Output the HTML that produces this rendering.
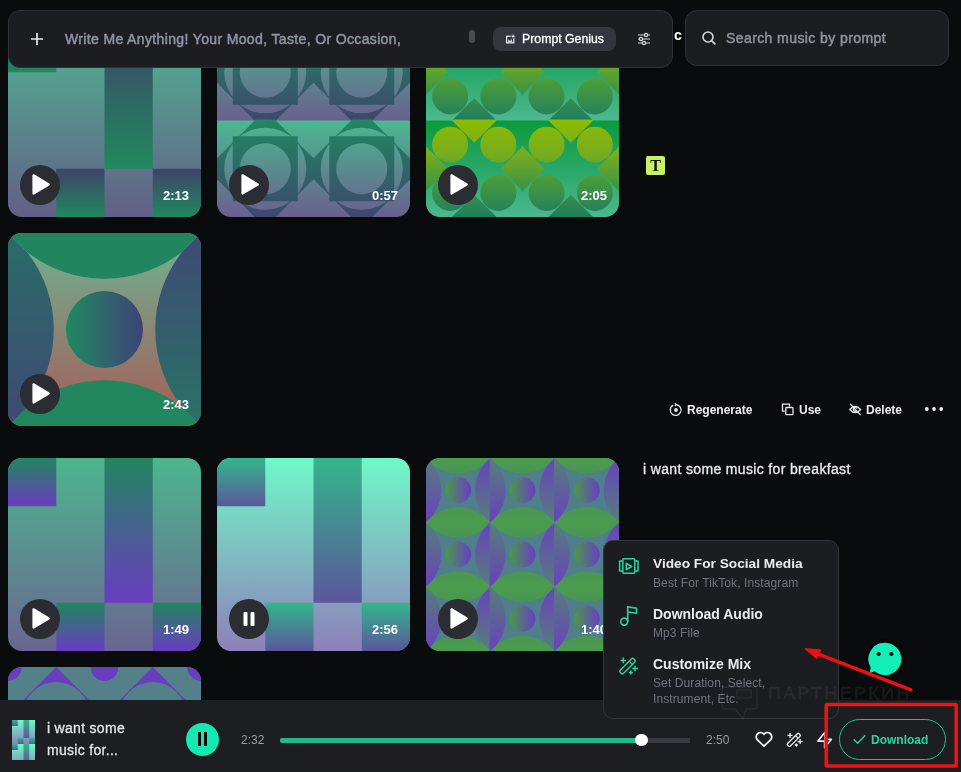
<!DOCTYPE html>
<html><head><meta charset="utf-8">
<style>
*{margin:0;padding:0;box-sizing:border-box}
html,body{width:961px;height:772px;overflow:hidden;background:#0a0b0d;font-family:"Liberation Sans",sans-serif;position:relative}
.abs{position:absolute}
.card{position:absolute;width:193px;height:193px;border-radius:14px;overflow:hidden}
.card svg{position:absolute;left:0;top:0}
.play{position:absolute;left:11.8px;top:141.3px;width:40px;height:40px;border-radius:50%;background:#2b2d33}
.play svg{position:absolute;left:0;top:0}
.dur{position:absolute;right:12px;top:164px;font-size:13px;font-weight:bold;color:#fff;line-height:16px;letter-spacing:0;will-change:transform}
.box{position:absolute;background:#1c1d21;border:1px solid #2f3137;border-radius:12px}
.txt{position:absolute;white-space:nowrap;will-change:transform}
</style></head>
<body>

<!-- ROW 1 -->
<div class="card" style="left:8px;top:24px" id="cA"><svg width="193" height="193" viewBox="0 0 193 193"><defs>
<linearGradient id="abg" x1="0" y1="0" x2="0" y2="1"><stop offset="0" stop-color="#4fb592"/><stop offset="1" stop-color="#635e86"/></linearGradient>
<linearGradient id="adk" x1="0" y1="0" x2="0" y2="1"><stop offset="0" stop-color="#3e4268"/><stop offset="1" stop-color="#20895f"/></linearGradient>
</defs>
<rect width="193" height="193" fill="url(#abg)"/>
<rect x="0" y="0" width="48.25" height="48.25" fill="url(#adk)"/>
<rect x="96.5" y="0" width="48.25" height="144.75" fill="url(#adk)"/>
<rect x="48.25" y="144.75" width="48.25" height="48.25" fill="url(#adk)"/>
<rect x="144.75" y="144.75" width="48.25" height="48.25" fill="url(#adk)"/>
</svg><div class="play"><svg width="40" height="40" viewBox="0 0 40 40"><path d="M13.5 10.3 L13.5 28.6 L28.8 19.45 Z" fill="#fff" stroke="#fff" stroke-width="2.2" stroke-linejoin="round"/></svg></div><div class="dur">2:13</div></div><!--/cA-->
<div class="card" style="left:217px;top:24px" id="cB"><svg width="193" height="193" viewBox="0 0 193 193"><defs>
<linearGradient id="bbg" gradientUnits="userSpaceOnUse" x1="0" y1="0" x2="0" y2="96.5"><stop offset="0" stop-color="#4bb891"/><stop offset="1" stop-color="#6a5f8e"/></linearGradient>
<linearGradient id="bdk" gradientUnits="userSpaceOnUse" x1="0" y1="0" x2="0" y2="96.5"><stop offset="0" stop-color="#21885f"/><stop offset="1" stop-color="#3d476f"/></linearGradient>
<g id="bg"><rect x="0" y="0" width="97.5" height="97.5" fill="url(#bbg)"/></g>
<clipPath id="bclip"><rect x="-1" y="-1" width="98.5" height="98.5"/></clipPath>
<g id="bt">
<polygon points="48.25,-10.5 107.0,48.25 48.25,107.0 -10.5,48.25" fill="url(#bdk)" clip-path="url(#bclip)"/>
<circle cx="48.25" cy="48.25" r="41" fill="url(#bbg)"/>
<rect x="15.75" y="15.75" width="65" height="65" fill="url(#bdk)"/>
<circle cx="48.25" cy="48.25" r="25.5" fill="url(#bbg)"/>
</g>
</defs>
<use href="#bg" x="0" y="0"/><use href="#bg" x="96.5" y="0"/><use href="#bg" x="0" y="96.5"/><use href="#bg" x="96.5" y="96.5"/><use href="#bt" x="0" y="0"/><use href="#bt" x="96.5" y="0"/><use href="#bt" x="0" y="96.5"/><use href="#bt" x="96.5" y="96.5"/>
</svg><div class="play"><svg width="40" height="40" viewBox="0 0 40 40"><path d="M13.5 10.3 L13.5 28.6 L28.8 19.45 Z" fill="#fff" stroke="#fff" stroke-width="2.2" stroke-linejoin="round"/></svg></div><div class="dur">0:57</div></div><!--/cB-->
<div class="card" style="left:426px;top:24px" id="cC"><svg width="193" height="193" viewBox="0 0 193 193"><defs>
<linearGradient id="cbg" gradientUnits="userSpaceOnUse" x1="0" y1="0" x2="0" y2="96.5"><stop offset="0" stop-color="#0b9a3c"/><stop offset="0.5" stop-color="#28a868"/><stop offset="1" stop-color="#4cb890"/></linearGradient>
<linearGradient id="cy" gradientUnits="userSpaceOnUse" x1="0" y1="0" x2="0" y2="96.5"><stop offset="0" stop-color="#8dbb00"/><stop offset="0.35" stop-color="#76ac20"/><stop offset="0.65" stop-color="#45983f"/><stop offset="1" stop-color="#1f7d5f"/></linearGradient>
<g id="cg"><rect x="0" y="0" width="97.5" height="97.5" fill="url(#cbg)"/></g>
<clipPath id="cclip"><rect x="-1" y="-1" width="98.5" height="98.5"/></clipPath>
<g id="ct"><polygon points="24.95,-1.0 71.55,-1.0 48.25,22.3" fill="url(#cy)"/><polygon points="24.95,97.5 71.55,97.5 48.25,74.2" fill="url(#cy)"/><polygon points="-1.0,24.95 -1.0,71.55 22.3,48.25" fill="url(#cy)"/><polygon points="97.5,24.95 97.5,71.55 74.2,48.25" fill="url(#cy)"/>
<circle cx="24.125" cy="24.125" r="18" fill="url(#cy)"/>
<circle cx="72.375" cy="24.125" r="18" fill="url(#cy)"/>
<circle cx="24.125" cy="72.375" r="18" fill="url(#cy)"/>
<circle cx="72.375" cy="72.375" r="18" fill="url(#cy)"/>
</g>
</defs>
<use href="#cg" x="0" y="0"/><use href="#cg" x="96.5" y="0"/><use href="#cg" x="0" y="96.5"/><use href="#cg" x="96.5" y="96.5"/><use href="#ct" x="0" y="0"/><use href="#ct" x="96.5" y="0"/><use href="#ct" x="0" y="96.5"/><use href="#ct" x="96.5" y="96.5"/>
</svg><div class="play"><svg width="40" height="40" viewBox="0 0 40 40"><path d="M13.5 10.3 L13.5 28.6 L28.8 19.45 Z" fill="#fff" stroke="#fff" stroke-width="2.2" stroke-linejoin="round"/></svg></div><div class="dur">2:05</div></div><!--/cC-->
<!-- ROW 2 -->
<div class="card" style="left:8px;top:233px" id="cD"><svg width="193" height="193" viewBox="0 0 193 193"><defs><linearGradient id="dab" x1="0" y1="0" x2="0" y2="1"><stop offset="0" stop-color="#6cb494"/><stop offset="1" stop-color="#a85a55"/></linearGradient>
<linearGradient id="dtc" x1="0" y1="0" x2="0" y2="1"><stop offset="0" stop-color="#21855f"/><stop offset="1" stop-color="#21855f"/></linearGradient>
<linearGradient id="dbc" x1="0" y1="0" x2="0" y2="1"><stop offset="0" stop-color="#22875f"/><stop offset="1" stop-color="#22875f"/></linearGradient>
<linearGradient id="dlc" x1="0" y1="0" x2="0" y2="1"><stop offset="0" stop-color="#2a6c68"/><stop offset="1" stop-color="#3e4a74"/></linearGradient>
<linearGradient id="drc" x1="0" y1="0" x2="0" y2="1"><stop offset="0" stop-color="#3e4a74"/><stop offset="1" stop-color="#2a7266"/></linearGradient>
<linearGradient id="dcc" x1="0" y1="0" x2="1" y2="0"><stop offset="0" stop-color="#1f8a5f"/><stop offset="1" stop-color="#3f4277"/></linearGradient>
<g id="dt">
<rect x="-0.4" y="-0.4" width="193.8" height="193.8" fill="url(#dab)"/>
<path d="M-0.6,-0.6 L193.6,-0.6 L174.25,18.75 A125.4,125.4 0 0,1 18.75,18.75 Z" fill="url(#dtc)"/>
<path d="M-0.6,193.6 L193.6,193.6 L174.25,174.25 A125.4,125.4 0 0,0 18.75,174.25 Z" fill="url(#dbc)"/>
<path d="M-0.6,-0.6 L18.75,18.75 A125.4,125.4 0 0,1 18.75,174.25 L-0.6,193.6 Z" fill="url(#dlc)"/>
<path d="M193.6,-0.6 L174.25,18.75 A125.4,125.4 0 0,0 174.25,174.25 L193.6,193.6 Z" fill="url(#drc)"/>
<circle cx="96.5" cy="96.5" r="38.5" fill="url(#dcc)"/>
</g></defs><use href="#dt"/></svg><div class="play"><svg width="40" height="40" viewBox="0 0 40 40"><path d="M13.5 10.3 L13.5 28.6 L28.8 19.45 Z" fill="#fff" stroke="#fff" stroke-width="2.2" stroke-linejoin="round"/></svg></div><div class="dur">2:43</div></div><!--/cD-->
<!-- ROW 3 -->
<div class="card" style="left:8px;top:458px" id="cE"><svg width="193" height="193" viewBox="0 0 193 193"><defs>
<linearGradient id="ebg" x1="0" y1="0" x2="0" y2="1"><stop offset="0" stop-color="#4db58e"/><stop offset="1" stop-color="#6a6592"/></linearGradient>
<linearGradient id="edk" x1="0" y1="0" x2="0" y2="1"><stop offset="0" stop-color="#22855f"/><stop offset="1" stop-color="#6a3cc2"/></linearGradient>
</defs>
<rect width="193" height="193" fill="url(#ebg)"/>
<rect x="0" y="0" width="48.25" height="48.25" fill="url(#edk)"/>
<rect x="96.5" y="0" width="48.25" height="144.75" fill="url(#edk)"/>
<rect x="48.25" y="144.75" width="48.25" height="48.25" fill="url(#edk)"/>
<rect x="144.75" y="144.75" width="48.25" height="48.25" fill="url(#edk)"/>
</svg><div class="play"><svg width="40" height="40" viewBox="0 0 40 40"><path d="M13.5 10.3 L13.5 28.6 L28.8 19.45 Z" fill="#fff" stroke="#fff" stroke-width="2.2" stroke-linejoin="round"/></svg></div><div class="dur">1:49</div></div><!--/cE-->
<div class="card" style="left:217px;top:458px" id="cF"><svg width="193" height="193" viewBox="0 0 193 193"><defs>
<linearGradient id="fbg" x1="0" y1="0" x2="0" y2="1"><stop offset="0" stop-color="#70f8c9"/><stop offset="1" stop-color="#8e80bb"/></linearGradient>
<linearGradient id="fdk" x1="0" y1="0" x2="0" y2="1"><stop offset="0" stop-color="#33b68a"/><stop offset="1" stop-color="#5b569c"/></linearGradient>
</defs>
<rect width="193" height="193" fill="url(#fbg)"/>
<rect x="0" y="0" width="48.25" height="48.25" fill="url(#fdk)"/>
<rect x="96.5" y="0" width="48.25" height="144.75" fill="url(#fdk)"/>
<rect x="48.25" y="144.75" width="48.25" height="48.25" fill="url(#fdk)"/>
<rect x="144.75" y="144.75" width="48.25" height="48.25" fill="url(#fdk)"/>
</svg><div class="play"><svg width="40" height="40" viewBox="0 0 40 40"><rect x="14.5" y="13" width="4" height="14" rx="1" fill="#fff"/><rect x="21.5" y="13" width="4" height="14" rx="1" fill="#fff"/></svg></div><div class="dur">2:56</div></div><!--/cF-->
<div class="card" style="left:426px;top:458px" id="cG"><svg width="193" height="193" viewBox="0 0 193 193"><defs><linearGradient id="gab" x1="0" y1="0" x2="0" y2="1"><stop offset="0" stop-color="#4f7f8a"/><stop offset="1" stop-color="#4f7f8a"/></linearGradient>
<linearGradient id="gtc" x1="0" y1="0" x2="0" y2="1"><stop offset="0" stop-color="#4b9c50"/><stop offset="1" stop-color="#4a9650"/></linearGradient>
<linearGradient id="gbc" x1="0" y1="0" x2="0" y2="1"><stop offset="0" stop-color="#4a9650"/><stop offset="1" stop-color="#4b9c50"/></linearGradient>
<linearGradient id="glc" x1="0" y1="0" x2="0" y2="1"><stop offset="0" stop-color="#548078"/><stop offset="1" stop-color="#6a40c0"/></linearGradient>
<linearGradient id="grc" x1="0" y1="0" x2="0" y2="1"><stop offset="0" stop-color="#6a40c0"/><stop offset="1" stop-color="#548078"/></linearGradient>
<linearGradient id="gcc" x1="0" y1="0" x2="1" y2="0"><stop offset="0" stop-color="#4a9a4a"/><stop offset="1" stop-color="#6a3cc8"/></linearGradient>
<g id="gt">
<rect x="-0.4" y="-0.4" width="65.13333333333333" height="65.13333333333333" fill="url(#gab)"/>
<path d="M-0.6,-0.6 L64.93333333333332,-0.6 L58.08333333333333,6.25 A41.8,41.8 0 0,1 6.25,6.25 Z" fill="url(#gtc)"/>
<path d="M-0.6,64.93333333333332 L64.93333333333332,64.93333333333332 L58.08333333333333,58.08333333333333 A41.8,41.8 0 0,0 6.25,58.08333333333333 Z" fill="url(#gbc)"/>
<path d="M-0.6,-0.6 L6.25,6.25 A41.8,41.8 0 0,1 6.25,58.08333333333333 L-0.6,64.93333333333332 Z" fill="url(#glc)"/>
<path d="M64.93333333333332,-0.6 L58.08333333333333,6.25 A41.8,41.8 0 0,0 58.08333333333333,58.08333333333333 L64.93333333333332,64.93333333333332 Z" fill="url(#grc)"/>
<circle cx="32.166666666666664" cy="32.166666666666664" r="12.833333333333332" fill="url(#gcc)"/>
</g></defs><use href="#gt" x="0.0" y="0.0"/><use href="#gt" x="0.0" y="64.33333333333333"/><use href="#gt" x="0.0" y="128.66666666666666"/><use href="#gt" x="64.33333333333333" y="0.0"/><use href="#gt" x="64.33333333333333" y="64.33333333333333"/><use href="#gt" x="64.33333333333333" y="128.66666666666666"/><use href="#gt" x="128.66666666666666" y="0.0"/><use href="#gt" x="128.66666666666666" y="64.33333333333333"/><use href="#gt" x="128.66666666666666" y="128.66666666666666"/></svg><div class="play"><svg width="40" height="40" viewBox="0 0 40 40"><path d="M13.5 10.3 L13.5 28.6 L28.8 19.45 Z" fill="#fff" stroke="#fff" stroke-width="2.2" stroke-linejoin="round"/></svg></div><div class="dur">1:40</div></div><!--/cG-->
<!-- ROW 4 -->
<div class="card" style="left:8px;top:667px" id="cH"><svg width="193" height="193" viewBox="0 0 193 193"><defs><g id="ht">
<polygon points="48.25,0 96.5,48.25 48.25,96.5 0,48.25" fill="#6a3dc0"/>
<circle cx="48.25" cy="48.25" r="33.25" fill="#538089"/>
<circle cx="0" cy="0" r="13.7" fill="#6a3dc0"/>
<circle cx="96.5" cy="0" r="13.7" fill="#6a3dc0"/>
</g></defs><rect width="193" height="193" fill="#538089"/>
<use href="#ht" x="0" y="0"/><use href="#ht" x="96.5" y="0"/></svg></div><!--/cH-->

<!-- HEADER -->
<div class="txt" style="left:669.5px;top:27px;font-size:14px;font-weight:bold;color:#fff;line-height:17px">ic</div>
<div class="box" style="left:8px;top:10px;width:665px;height:57.5px"></div>
<svg class="abs" style="left:30px;top:32px" width="14" height="14" viewBox="0 0 14 14"><path d="M7 1V13M1 7H13" stroke="#e8e8ea" stroke-width="1.7" stroke-linecap="butt"/></svg>
<div class="txt" style="left:65px;top:31px;font-size:14px;color:#8e94a6;line-height:16px;-webkit-text-stroke:0.5px #8e94a6;letter-spacing:0.36px" id="ph">Write Me Anything! Your Mood, Taste, Or Occasion,</div>
<div class="abs" style="left:469px;top:30px;width:6px;height:13px;border-radius:3px;background:#4b4c52"></div>
<div class="abs" style="left:493px;top:27px;width:123px;height:24px;border-radius:8px;background:#35363d"></div>
<svg class="abs" style="left:505px;top:33px" width="12" height="11" viewBox="0 0 12 11"><rect x="1.6" y="3.3" width="7.2" height="6.6" fill="none" stroke="#eeeef0" stroke-width="1.2"/><path d="M2.6 9.4 L3.6 6.2 L5.2 8.4 L6.2 5.6 L7.6 9.4Z" fill="#d8d8dc"/><path d="M8.1 0.6 L8.9 2.5 L10.8 3.3 L8.9 4.1 L8.1 6 L7.3 4.1 L5.4 3.3 L7.3 2.5Z" fill="#eeeef0" stroke="#35363d" stroke-width="0.6"/></svg>
<div class="txt" style="left:522px;top:31px;font-size:12.3px;color:#fff;line-height:16px;-webkit-text-stroke:0.3px #fff;letter-spacing:0px;top:30.5px" id="pg">Prompt Genius</div>
<svg class="abs" style="left:637px;top:32px" width="14" height="14" viewBox="0 0 14 14" fill="none" stroke="#dcdcde" stroke-width="1.2"><path d="M1 3H13M1 7H13M1 11H13"/><circle cx="9" cy="3" r="1.6" fill="#1c1d21"/><circle cx="4" cy="7" r="1.6" fill="#1c1d21"/><circle cx="7" cy="11" r="1.6" fill="#1c1d21"/></svg>
<div class="box" style="left:685px;top:10px;width:264px;height:56px"></div>
<svg class="abs" style="left:701.4px;top:30px" width="16" height="16" viewBox="0 0 16 16" fill="none" stroke="#d8d8da" stroke-width="1.6"><circle cx="7" cy="7" r="5"/><path d="M10.8 10.8L14 13.8" stroke-linecap="round"/></svg>
<div class="txt" style="left:726px;top:30px;font-size:14px;color:#8f929b;line-height:16px;-webkit-text-stroke:0.5px #8f929b;letter-spacing:0.41px" id="st">Search music by prompt</div>

<!-- T icon -->
<div class="abs" style="left:646px;top:156px;width:19px;height:18.5px;border-radius:2px;background:#c9f166"></div>
<div class="txt" style="left:646px;top:157px;width:19px;text-align:center;font-family:'Liberation Serif',serif;font-size:16px;font-weight:bold;line-height:17px;color:#111">T</div>

<!-- actions -->
<svg class="abs" style="left:669px;top:403px" width="14" height="14" viewBox="0 0 14 14" fill="none" stroke="#e8e8ea" stroke-width="1.3"><path d="M4.2 2.2 A5.4 5.4 0 1 0 7 1.6"/><path d="M5.8 0.3 L7.3 1.6 L5.8 2.9" stroke-linejoin="round"/><circle cx="7" cy="7" r="1.9" fill="#e8e8ea" stroke="none"/></svg>
<div class="txt" style="left:687px;top:403px;font-size:12px;color:#f0f0f2;line-height:15px;font-weight:bold" id="rg">Regenerate</div>
<svg class="abs" style="left:781px;top:403px" width="14" height="13" viewBox="0 0 14 13" fill="none" stroke="#e8e8ea" stroke-width="1.3"><path d="M8.5 3.5 V1.2 H1.5 V8.2 H3.8"/><rect x="4.8" y="4.5" width="7.2" height="7.2" rx="0.8"/></svg>
<div class="txt" style="left:799px;top:403px;font-size:12px;color:#f0f0f2;line-height:15px;font-weight:bold" id="us">Use</div>
<svg class="abs" style="left:846px;top:400px" width="18" height="18" viewBox="846 400 18 18" fill="none" stroke="#e8e8ea" stroke-width="1.3" stroke-linecap="round"><path d="M849.8 409.5 Q855.2 403.2 860.6 409.5 Q855.2 415.8 849.8 409.5Z"/><path d="M856.8 408.2 A1.9 1.9 0 1 0 856.4 410.9"/><path d="M850.4 404.2 L860.2 414.6"/></svg>
<div class="txt" style="left:866px;top:403px;font-size:12px;color:#f0f0f2;line-height:15px;font-weight:bold" id="dl">Delete</div>
<svg class="abs" style="left:924px;top:406px" width="20" height="6" viewBox="0 0 20 6" fill="#f0f0f2"><circle cx="2.8" cy="3" r="1.9"/><circle cx="10" cy="3" r="1.9"/><circle cx="17.2" cy="3" r="1.9"/></svg>

<div class="txt" style="left:643px;top:460px;font-size:14px;color:#ececee;line-height:17px;-webkit-text-stroke:0.3px #ececee;letter-spacing:0.35px;top:461px" id="pr">i want some music for breakfast</div>

<!-- PLAYER BAR -->
<div class="abs" style="left:0;top:700px;width:961px;height:72px;background:#1d1e22"></div>

<!-- PLAYER CONTENT -->
<svg class="abs" style="left:12px;top:720px" width="23" height="40" viewBox="0 0 23 40"><defs><linearGradient id="thbg" x1="0" y1="0" x2="0" y2="1"><stop offset="0" stop-color="#70f8c9"/><stop offset="1" stop-color="#8e80bb"/></linearGradient><linearGradient id="thdk" x1="0" y1="0" x2="0" y2="1"><stop offset="0" stop-color="#33b68a"/><stop offset="1" stop-color="#5b569c"/></linearGradient>
<g id="tht"><rect width="23" height="24" fill="url(#thbg)"/><rect x="0" y="0" width="5.75" height="6" fill="url(#thdk)"/><rect x="11.5" y="0" width="5.75" height="18" fill="url(#thdk)"/><rect x="5.75" y="18" width="5.75" height="6" fill="url(#thdk)"/><rect x="17.25" y="18" width="5.75" height="6" fill="url(#thdk)"/></g></defs><use href="#tht"/><use href="#tht" y="24"/></svg>
<div class="txt" style="left:47px;top:717px;font-size:14px;color:#e6e6e8;line-height:22px;-webkit-text-stroke:0.3px #e6e6e8;letter-spacing:0.3px" id="pt">i want some<br>music for...</div>
<div class="abs" style="left:186px;top:723px;width:33px;height:33px;border-radius:50%;background:#13e9b1"></div>
<div class="abs" style="left:197.7px;top:732.3px;width:3.6px;height:14px;background:#0b0c0e"></div>
<div class="abs" style="left:203.7px;top:732.3px;width:3.6px;height:14px;background:#0b0c0e"></div>
<div class="txt" style="left:241px;top:733px;font-size:12px;color:#9b9da4;line-height:14px" id="t1">2:32</div>
<div class="abs" style="left:280px;top:737.5px;width:410px;height:5px;background:#393a41"></div>
<div class="abs" style="left:280px;top:737.5px;width:362px;height:5px;border-radius:2.5px 0 0 2.5px;background:#1fb98a"></div>
<div class="abs" style="left:635.3px;top:733.7px;width:12.6px;height:12.6px;border-radius:50%;background:#fff"></div>
<div class="txt" style="left:706px;top:733px;font-size:12px;color:#9b9da4;line-height:14px" id="t2">2:50</div>
<svg class="abs" style="left:754px;top:731px" width="20" height="17" viewBox="0 0 20 17" fill="none" stroke="#f0f0f2" stroke-width="1.8" stroke-linejoin="round"><path d="M10 15.2 L3.2 8.6 A3.9 3.9 0 0 1 10 3.2 A3.9 3.9 0 0 1 16.8 8.6 Z"/></svg>
<svg class="abs" style="left:780px;top:726px" width="30" height="28" viewBox="780 726 30 28" fill="none" stroke="#f0f0f2"><g transform="rotate(-45 793.8 739.9)"><rect x="785.7" y="738" width="16.2" height="3.8" rx="1.2" stroke-width="1.35"/><path d="M798 738 V741.8" stroke-width="1.2"/></g><path d="M790 732.9 V737.9 M787.5 735.4 H792.5 M800.1 739.1 V744.1 M797.6 741.6 H802.6" stroke-width="1.3"/><path d="M796.3 743.4 L797.8 745 L796.3 746.6 L794.8 745Z" fill="#f0f0f2" stroke-width="0.6"/></svg>
<svg class="abs" style="left:812px;top:728px" width="24" height="24" viewBox="812 728 24 24" fill="none" stroke="#f0f0f2" stroke-width="1.6" stroke-linejoin="round"><path d="M824.8 732.6 L817.9 741.1 H824.6 V747.8 L831.4 739.3 H825 Z"/></svg>
<div class="abs" style="left:839px;top:719px;width:106.5px;height:41px;border-radius:20.5px;border:1.5px solid #20bf8f"></div>
<svg class="abs" style="left:853px;top:734px" width="13" height="11" viewBox="0 0 13 11" fill="none" stroke="#22cc98" stroke-width="1.6" stroke-linecap="round" stroke-linejoin="round"><path d="M1.2 5.8 L4.6 9.2 L11.8 1.8"/></svg>
<div class="txt" style="left:871px;top:732px;font-size:12px;color:#2ad49f;line-height:15px;font-weight:bold;top:733px" id="dw">Download</div>

<!-- POPUP -->
<div class="box" style="left:603.4px;top:539.8px;width:235.4px;height:179.4px;border-radius:10px;border-color:#34353b"></div>
<svg class="abs" style="left:614px;top:552px" width="30" height="26" viewBox="614 552 30 26" fill="none" stroke="#2ad6a0" stroke-width="1.5" stroke-linejoin="round"><rect x="622.8" y="558.8" width="12" height="14.4" rx="1"/><path d="M622.8 561 H619.6 V571 H622.8 M634.8 561 H638 V571 H634.8"/><path d="M626.3 563.3 L631.6 566.5 L626.3 569.7 Z"/></svg>
<div class="txt" style="left:653px;top:556px;font-size:13.7px;color:#ececee;line-height:16px;font-weight:bold" id="p1">Video For Social Media</div>
<div class="txt" style="left:653px;top:576px;font-size:12px;color:#71747f;line-height:14px;letter-spacing:0.1px" id="p1s">Best For TikTok, Instagram</div>
<svg class="abs" style="left:614px;top:602px" width="28" height="28" viewBox="614 602 28 28" fill="none" stroke="#2ad6a0" stroke-width="1.6" stroke-linejoin="round"><circle cx="624.2" cy="621.6" r="3.5"/><path d="M627.7 621.6 V606.9 L636.6 608.2 V613.3 L627.7 612"/></svg>
<div class="txt" style="left:653px;top:606px;font-size:14px;color:#ececee;line-height:16px;font-weight:bold" id="p2">Download Audio</div>
<div class="txt" style="left:653px;top:626px;font-size:12px;color:#71747f;line-height:14px;letter-spacing:0.1px" id="p2s">Mp3 File</div>
<svg class="abs" style="left:614px;top:652px" width="30" height="26" viewBox="614 652 30 26" fill="none" stroke="#2ad6a0"><g transform="rotate(-45 627.5 666.1)"><rect x="618" y="663.8" width="19" height="4.6" rx="1.4" stroke-width="1.4"/><path d="M632.2 663.8 V668.4" stroke-width="1.3"/></g><path d="M623.3 657.6 V663.2 M620.5 660.4 H626.1 M635 665.7 V671.3 M632.2 668.5 H637.8 M630.8 670.4 V674.4 M628.8 672.4 H632.8" stroke-width="1.5"/></svg>
<div class="txt" style="left:653px;top:656px;font-size:14px;color:#ececee;line-height:16px;font-weight:bold" id="p3">Customize Mix</div>
<div class="txt" style="left:653px;top:675px;font-size:12px;color:#71747f;line-height:16px;letter-spacing:0.1px" id="p3s">Set Duration, Select,<br>Instrument, Etc.</div>

<!-- watermark -->
<div class="txt" id="wm" style="left:768px;top:686px;font-size:16px;color:#fff;opacity:0.06;-webkit-text-stroke:0.3px #fff;line-height:16px;letter-spacing:2.35px;transform:scaleX(1.1);transform-origin:0 0">ПАРТНЕРКИН</div>
<svg class="abs" style="left:720px;top:685px" width="40" height="36" viewBox="0 0 40 36" fill="none" stroke="#fff" stroke-width="1.3" opacity="0.06"><path d="M5 2 H34 A3 3 0 0 1 37 5 V21 A3 3 0 0 1 34 24 H26 L23 34 L15 24 H5 A3 3 0 0 1 2 21 V5 A3 3 0 0 1 5 2Z"/><path d="M17 5 H31 V13 H17Z"/></svg>

<!-- chat bubble -->
<svg class="abs" style="left:862px;top:636px" width="46" height="46" viewBox="0 0 46 46"><circle cx="23.2" cy="23" r="19.5" fill="#050607"/><path d="M23.2 6.8 A16.2 16.2 0 1 1 12.5 35.2 L7.8 37.2 L8.6 31.2 A16.2 16.2 0 0 1 23.2 6.8Z" fill="#12efb9"/><circle cx="16.7" cy="18" r="2.1" fill="#050607"/><circle cx="29.4" cy="18" r="2.1" fill="#050607"/></svg>

<!-- red annotations -->
<svg class="abs" style="left:0;top:0" width="961" height="772" viewBox="0 0 961 772"><path d="M911 689.8 L817 653.6" stroke="#ee1111" stroke-width="3.4" stroke-linecap="round"/><path d="M805.3 648.7 L820.5 650.2 L816.5 658.2 Z" fill="#ee1111" stroke="#ee1111" stroke-width="1.2" stroke-linejoin="round"/><rect x="826.2" y="704.6" width="130" height="61.3" rx="1" fill="none" stroke="#ec1316" stroke-width="3.5"/></svg>

</body></html>
